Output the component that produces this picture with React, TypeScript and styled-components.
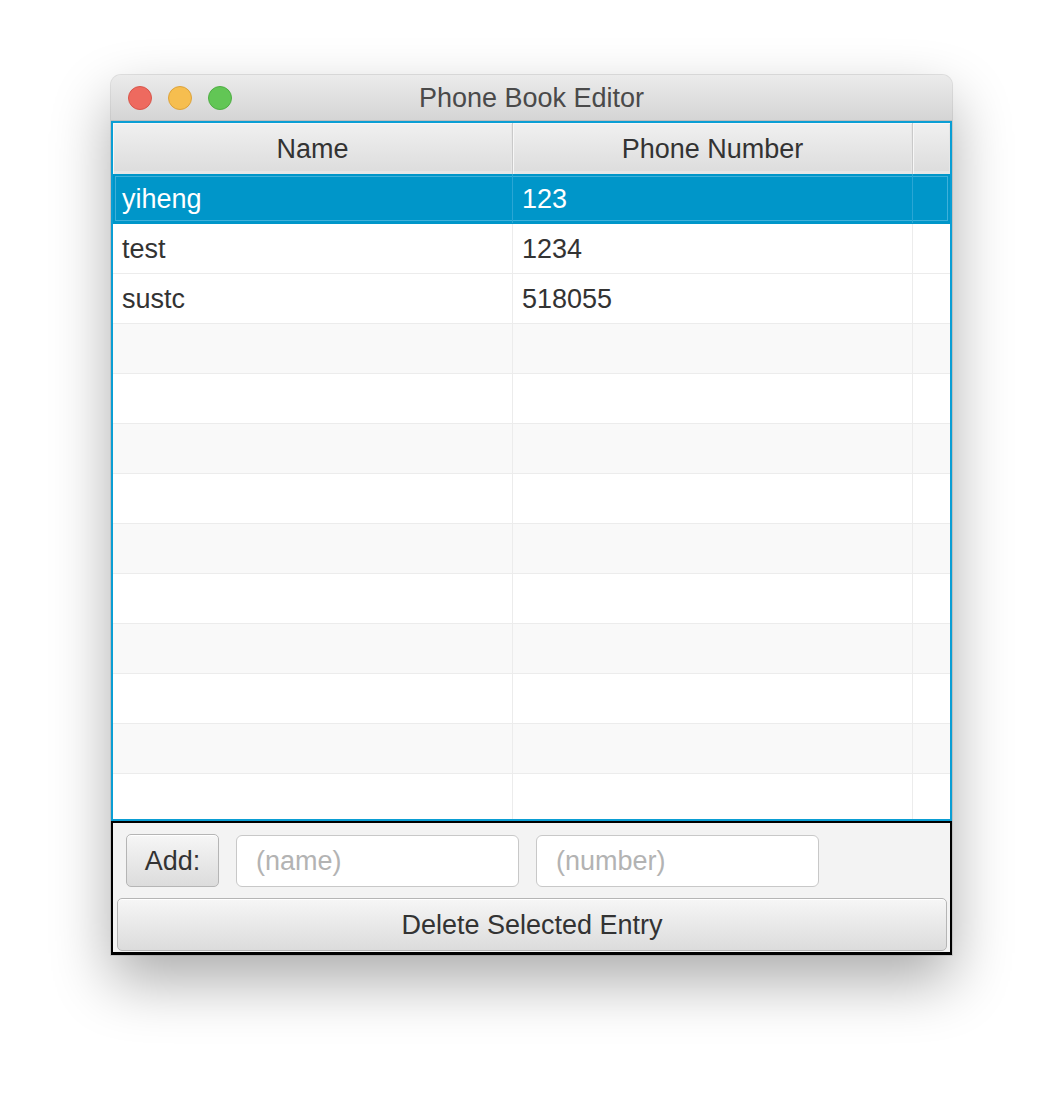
import React from "react";
import styled, { createGlobalStyle } from "styled-components";

const GlobalStyle = createGlobalStyle`
  html, body { margin: 0; padding: 0; background: #ffffff; }
  body { font-family: "Liberation Sans", Arial, Helvetica, sans-serif; }
  * { box-sizing: border-box; }
`;

const Page = styled.div`
  width: 1064px;
  height: 1104px;
  padding: 75px 0 0 111px;
`;

const Window = styled.div`
  width: 841px;
  display: flex;
  flex-direction: column;
  border-radius: 10px 10px 0 0;
  background: #ececec;
  box-shadow: 0 26px 60px rgba(0, 0, 0, 0.33), 0 0 0 1px rgba(0, 0, 0, 0.1);
`;

const TitleBar = styled.div`
  height: 46px;
  display: grid;
  grid-template-columns: 1fr auto 1fr;
  align-items: center;
  border-radius: 10px 10px 0 0;
  background: linear-gradient(#ebebeb, #d5d5d5);
  border-bottom: 1px solid #bdbdbd;
  padding: 0 17px;
`;

const Lights = styled.div`
  display: flex;
  gap: 16px;
`;

const Light = styled.span<{ $fill: string; $stroke: string }>`
  width: 24px;
  height: 24px;
  border-radius: 50%;
  background: ${(p) => p.$fill};
  border: 1px solid ${(p) => p.$stroke};
`;

const Title = styled.div`
  font-size: 27px;
  color: #4a4a4a;
  white-space: nowrap;
  padding-top: 2px;
`;

const Table = styled.div`
  border: 2px solid #0a9ed4;
  background: #ffffff;
`;

const Grid = styled.div`
  display: grid;
  grid-template-columns: 400px 400px 1fr;
`;

const HeaderRow = styled(Grid)`
  height: 51px;
  background: linear-gradient(#f0f0f0, #dcdcdc);
`;

const HeaderCell = styled.div`
  display: flex;
  align-items: center;
  justify-content: center;
  padding-top: 2px;
  font-size: 27px;
  color: #333333;
  border-right: 1px solid #c9c9c9;
  box-shadow: inset 1px 1px 0 #f7f7f7, inset -1px -3px 0 #e6e6e6;
  &:last-child { border-right: none; }
`;

const Body = styled.div`
  height: 645px;
  overflow: hidden;
`;

const Row = styled(Grid)<{ $alt: boolean; $selected: boolean }>`
  height: 50px;
  background: ${(p) => (p.$selected ? "#0096c9" : p.$alt ? "#f9f9f9" : "#ffffff")};
  border-bottom: 1px solid ${(p) => (p.$selected ? "#0096c9" : "#ececec")};
  box-shadow: ${(p) => (p.$selected ? "inset 0 0 0 2px #0096c9, inset 0 0 0 3px #3fb0da" : "none")};
  color: ${(p) => (p.$selected ? "#ffffff" : "#333333")};
`;

const Cell = styled.div<{ $selected: boolean }>`
  display: flex;
  align-items: center;
  padding: 2px 0 0 9px;
  font-size: 27px;
  border-right: 1px solid ${(p) => (p.$selected ? "#2aa6d4" : "#ececec")};
  &:last-child { border-right: none; }
`;

const Panel = styled.div`
  border: 2px solid #000000;
  border-bottom-width: 3px;
  background: #f3f3f3;
  padding: 11px 3px 1px 4px;
  display: flex;
  flex-direction: column;
  gap: 11px;
`;

const AddRow = styled.div`
  display: flex;
  align-items: center;
  gap: 17px;
  padding-left: 9px;
`;

const Button = styled.button<{ $wide?: boolean }>`
  height: 53px;
  width: ${(p) => (p.$wide ? "100%" : "93px")};
  border: 1px solid #b5b5b5;
  border-radius: 5px;
  background: linear-gradient(#f6f6f6, #dcdcdc);
  box-shadow: inset 0 1px 0 #ffffff;
  font-family: "Liberation Sans", Arial, sans-serif;
  font-size: 27px;
  color: #333333;
  padding: 2px 0 0;
`;

const Field = styled.input`
  width: 283px;
  height: 52px;
  border: 1.5px solid #c8c8c8;
  border-radius: 6px;
  background: #ffffff;
  padding: 2px 0 0 19px;
  font-family: "Liberation Sans", Arial, sans-serif;
  font-size: 27px;
  color: #333333;
  outline: none;
  &::placeholder { color: #b3b3b3; }
`;

const data = [
  { name: "yiheng", phone: "123" },
  { name: "test", phone: "1234" },
  { name: "sustc", phone: "518055" },
];

export default function App() {
  const rows = Array.from({ length: 13 }, (_, i) => data[i] ?? { name: "", phone: "" });
  return (
    <>
      <GlobalStyle />
      <Page>
        <Window>
          <TitleBar>
            <Lights>
              <Light $fill="#ee6a5f" $stroke="#d8564b" />
              <Light $fill="#f6be4f" $stroke="#dda33b" />
              <Light $fill="#62c655" $stroke="#4fae44" />
            </Lights>
            <Title>Phone Book Editor</Title>
            <div />
          </TitleBar>
          <Table>
            <HeaderRow>
              <HeaderCell>Name</HeaderCell>
              <HeaderCell>Phone Number</HeaderCell>
              <HeaderCell />
            </HeaderRow>
            <Body>
              {rows.map((r, i) => (
                <Row key={i} $alt={i % 2 === 1 && i > 2} $selected={i === 0}>
                  <Cell $selected={i === 0}>{r.name}</Cell>
                  <Cell $selected={i === 0}>{r.phone}</Cell>
                  <Cell $selected={i === 0} />
                </Row>
              ))}
            </Body>
          </Table>
          <Panel>
            <AddRow>
              <Button>Add:</Button>
              <Field placeholder="(name)" />
              <Field placeholder="(number)" />
            </AddRow>
            <Button $wide>Delete Selected Entry</Button>
          </Panel>
        </Window>
      </Page>
    </>
  );
}
